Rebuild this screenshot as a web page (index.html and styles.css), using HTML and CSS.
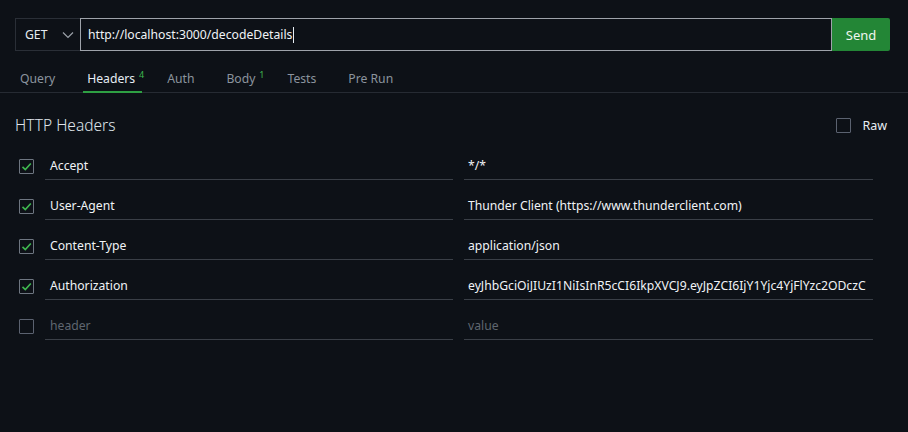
FILE: index.html
```html
<!DOCTYPE html>
<html>
<head>
<meta charset="utf-8">
<link rel="stylesheet" href="styles.css">
</head>
<body>
<div class="app">
  <div class="urlbar">
    <div class="method">
      <span>GET</span>
      <svg class="chev" width="12" height="8" viewBox="0 0 12 8"><path d="M1 1.5 L6 6.5 L11 1.5" fill="none" stroke="#9aa0a8" stroke-width="1.2"/></svg>
    </div>
    <div class="url">http://localhost:3000/decodeDetails<span class="caret"></span></div>
    <button class="send">Send</button>
  </div>
  <div class="tabs">
    <div class="tab">Query</div>
    <div class="tab active">Headers<sup>4</sup></div>
    <div class="tab">Auth</div>
    <div class="tab">Body<sup>1</sup></div>
    <div class="tab">Tests</div>
    <div class="tab">Pre Run</div>
  </div>
  <div class="panel">
    <div class="panel-head">
      <div class="title">HTTP Headers</div>
      <label class="raw"><span class="cb"></span><span>Raw</span></label>
    </div>
    <div class="rows">
      <div class="row">
        <span class="cb on"><svg width="13" height="13" viewBox="0 0 13 13"><path d="M2.5 6.8 L5.3 9.5 L10.8 3.5" fill="none" stroke="#3fb950" stroke-width="1.6"/></svg></span>
        <div class="field key">Accept</div>
        <div class="field val">*/*</div>
      </div>
      <div class="row">
        <span class="cb on"><svg width="13" height="13" viewBox="0 0 13 13"><path d="M2.5 6.8 L5.3 9.5 L10.8 3.5" fill="none" stroke="#3fb950" stroke-width="1.6"/></svg></span>
        <div class="field key">User-Agent</div>
        <div class="field val">Thunder Client (https://www.thunderclient.com)</div>
      </div>
      <div class="row">
        <span class="cb on"><svg width="13" height="13" viewBox="0 0 13 13"><path d="M2.5 6.8 L5.3 9.5 L10.8 3.5" fill="none" stroke="#3fb950" stroke-width="1.6"/></svg></span>
        <div class="field key">Content-Type</div>
        <div class="field val">application/json</div>
      </div>
      <div class="row">
        <span class="cb on"><svg width="13" height="13" viewBox="0 0 13 13"><path d="M2.5 6.8 L5.3 9.5 L10.8 3.5" fill="none" stroke="#3fb950" stroke-width="1.6"/></svg></span>
        <div class="field key">Authorization</div>
        <div class="field val">eyJhbGciOiJIUzI1NiIsInR5cCI6IkpXVCJ9.eyJpZCI6IjY1Yjc4YjFlYzc2ODczC</div>
      </div>
      <div class="row">
        <span class="cb"></span>
        <div class="field key ph">header</div>
        <div class="field val ph">value</div>
      </div>
    </div>
  </div>
</div>
</body>
</html>
```

FILE: styles.css
```css
html, body {
  margin: 0;
  padding: 0;
  background: #0d1117;
}
body {
  font-family: "Noto Sans", "Open Sans", sans-serif;
  font-size: 12.2px;
  color: #e6edf3;
  width: 908px;
  height: 432px;
  overflow: hidden;
}
.app {
  display: flex;
  flex-direction: column;
}
.urlbar {
  display: flex;
  margin: 18px 18px 0 15px;
  height: 33px;
}
.method {
  width: 65px;
  box-sizing: border-box;
  border: 1px solid #2a2f37;
  border-right: none;
  display: flex;
  align-items: center;
  justify-content: space-between;
  padding: 0 6px 0 9px;
  color: #e6edf3;
}
.chev { margin-top: 1px; }
.url {
  flex: 1;
  box-sizing: border-box;
  border: 1px solid #9ea3aa;
  display: flex;
  align-items: center;
  padding-left: 7px;
  color: #f0f3f6;
}
.caret {
  display: inline-block;
  width: 1px;
  height: 16px;
  background: #e6edf3;
  margin-left: 1px;
}
.send {
  width: 58px;
  border: none;
  background: #238636;
  color: #f0f6f0;
  font-family: inherit;
  font-size: 13px;
  border-radius: 0 2px 2px 0;
  padding: 0;
}
.tabs {
  display: flex;
  margin-top: 11px;
  padding-left: 20px;
  height: 30px;
  border-bottom: 1px solid #262b33;
  gap: 32px;
}
.tab {
  color: #8b949e;
  line-height: 26px;
  padding-top: 4px;
  position: relative;
}
.tab sup {
  color: #3fb950;
  font-size: 9px;
  line-height: 9px;
  position: absolute;
  right: -9px;
  top: 8px;
}
.tab.active {
  color: #e6edf3;
}
.tab.active::after {
  content: "";
  position: absolute;
  left: -4px;
  right: -7px;
  bottom: -1px;
  height: 2px;
  background: #2ea043;
}
.panel {
  padding: 0 35px 0 15px;
}
.panel-head {
  display: flex;
  justify-content: space-between;
  align-items: center;
  height: 30px;
  margin-top: 17px;
  margin-right: -14px;
}
.title {
  font-size: 15.5px;
  font-weight: 300;
  color: #dfe4ea;
}
.raw {
  display: flex;
  align-items: center;
  gap: 11px;
  color: #e6edf3;
  font-size: 12.5px;
}
.cb {
  width: 15px;
  height: 15px;
  box-sizing: border-box;
  border: 1px solid #5b6270;
  border-radius: 1px;
  display: inline-flex;
  align-items: center;
  justify-content: center;
  flex: none;
}
.cb.on { border-color: #6e7681; }
.rows {
  display: flex;
  flex-direction: column;
  margin-top: 6px;
}
.row {
  display: flex;
  align-items: center;
  height: 40px;
  padding-left: 4px;
}
.row .cb { margin-right: 11px; }
.field {
  height: 28px;
  box-sizing: border-box;
  border-bottom: 1px solid #3a3f47;
  display: flex;
  align-items: center;
  padding-left: 5px;
  overflow: hidden;
  white-space: nowrap;
  color: #f0f3f6;
}
.key { width: 408px; margin-right: 11px; }
.val { width: 409px; padding-left: 4px; }
.ph { color: #5f6670; }
```
